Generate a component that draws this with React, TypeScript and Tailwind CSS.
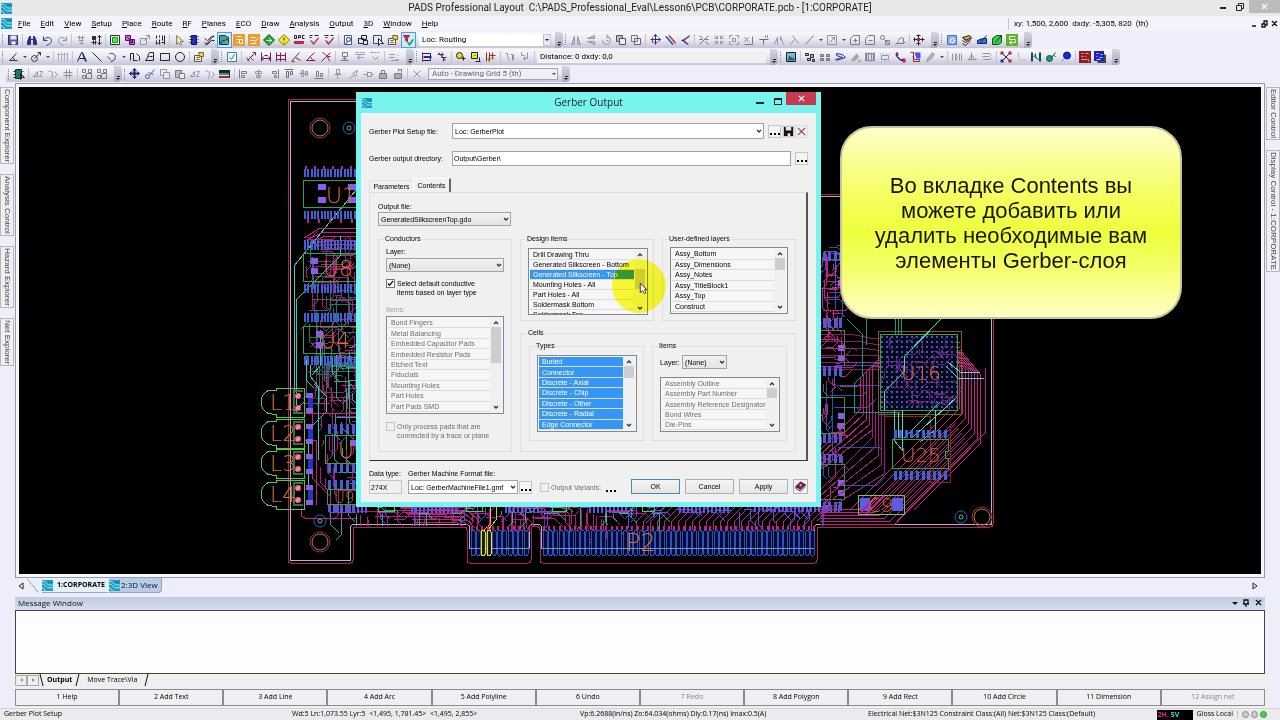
import { useState } from "react";
import type { ReactNode } from "react";
import { clsx } from "clsx";

type Shape = [d: string, stroke: string, fill?: string];

const G = "#9294a4";
const K = "#22232c";
const B = "#1c2fa8";
const R = "#a8203c";
const M = "#8c1a50";

// every toolbar glyph is drawn on a 12 x 12 grid
const glyphs: Record<string, Shape[]> = {
  save: [["M1 1H10V10H1Z", "#2e2f6e", "#5b5ea8"], ["M3 1H9V5H3Z", "none", "#e8e8f6"], ["M4 7H8V10H4Z", "none", "#fff"]],
  find: [["M1 7L3 2H4V10H1ZM7 2H8L10 7V10H7ZM4 5H7", B, "#27356f"]],
  undo: [["M2 2V6H6M2 6C4 2 10 2 10 6C10 9 7 10 5 11", "#2a3a9c"]],
  redo: [["M10 2V6H6M10 6C8 2 2 2 2 6C2 9 5 10 7 11", G]],
  libGray: [["M2 3H9M4 1V5M7 1V5M3 6H8M6 5V10M4 9H8", G]],
  libUp: [["M2 2H5V5H2ZM3 6V10M5 6V10M1 8H6", K, "#333"], ["M9 1V10M7 3L9 1L11 3M7 8L9 10L11 8", K]],
  chipGreen: [["M1 1H10V10H1Z", "#1d3a1d", "#e8ffe8"], ["M3 3H8V8H3Z", "#2a8a2a", "#58e058"]],
  swap: [["M1 1H6V6H1ZM5 5H10V10H5Z", "#501070", "#e05ad8"], ["M3 3L8 8M8 5V8H5", K]],
  swapGray: [["M1 4H7V10H1Z", G, "#e4e4ec"], ["M5 6L10 1M6 1H10V5", G]],
  nets: [["M2 1V4M2 6V10M5 1V3M5 5V10M8 1V6M10 1V10M7 8H10", K], ["M1 9H6", R]],
  pointer: [["M3 1V10L5 8L7 11L8 10L7 7H10Z", "#8a7a5a", "#f2e6c8"]],
  chip: [["M3 1H8V10H3Z", "#101080", "#2a2ab4"], ["M1 2H3M1 5H3M1 8H3M9 2H10M9 5H10M9 8H10", K]],
  traces: [["M1 4L4 6L8 2H11", M], ["M1 8L4 10L8 6H11M2 11L10 1", K]],
  route: [["M1 1H7L10 4V10H1Z", "#104040", "#40a0a8"], ["M2 9C5 3 8 9 10 2", K], ["M7 6L10 10", "#e8c020"]],
  tune: [["M-0.5 -0.5H11.5V11.5H-0.5Z", "none", "#f09a28"], ["M3 2H8M3 5H6M6 5H9V9H6ZM3 8H5", "#fff"]],
  tuneEdit: [["M-0.5 -0.5H11.5V11.5H-0.5Z", "none", "#f09a28"], ["M2 3H7M2 6H6M2 9H8M6 8L10 3", "#fff"]],
  go: [["M5.5 0L11 5.5L5.5 11L0 5.5Z", "#0a5a14", "#28a83c"], ["M3 6H8M6 4L8 6L6 8", "#fff"]],
  warn: [["M5.5 0L11 5.5L5.5 11L0 5.5Z", "#8a7a00", "#f6ec20"], ["M5.5 3V6M5.5 8V9", K]],
  drc: [["M1 1V4H3V1ZM5 4V1H7V3H5M9 1H11M9 1V4H11", K], ["M1 7H10V9H1Z", R, "#d83040"]],
  okRed: [["M1 1H4M6 1H10M1 3H3", K], ["M2 6L5 10L10 4", "#c82038"], ["M3 6L5 9L10 3", "#c82038"]],
  okRed2: [["M1 1H5M7 1H10M2 3H4", K], ["M2 6L5 10L10 4", "#b01848"], ["M3 6L5 9L10 3", "#b01848"]],
  zoomDoc: [["M2 1H9V10H2Z", "#4a5a7a", "#f4f6ff"], ["M4 5A2 2 0 1 0 8 5A2 2 0 1 0 4 5M5 7L3 10", B]],
  tile: [["M1 4H6V9H1ZM4 1H9V5H4ZM6 6H10V10H6Z", K, "#dfe4f8"]],
  selectBox: [["M1 1H9V9H1Z", "#30507a", "#dcecff"], ["M6 4V11L8 9H11Z", K, "#fff"]],
  props: [["M1 4H8V10H1Z", "#555", "#f6f4d8"], ["M5 1H10V5H6Z", "#8a6a10", "#e8c860"], ["M3 6H6M3 8H6", "#555"]],
  filter: [["M1 1H7L5 4V7L3 6V4Z", R, "#c83040"], ["M5 7L7 10L10 5M5 8L7 11L11 5", "#1c8a34"]],
  mirrorH: [["M1 10H4V2ZM7 10H10L7 2Z", G, "#c6c8d2"]],
  mirrorV: [["M9 1V4L2 4ZM9 7V10L2 7Z", G, "#c6c8d2"]],
  rotate: [["M2 6A4 4 0 1 0 6 2M6 0L8 2L6 4M6 6H8", G]],
  front: [["M1 1H7V7H1Z", "#555", "#b8bac6"], ["M4 4H10V10H4Z", "#555", "#eee"]],
  back: [["M4 4H10V10H4Z", "#666", "#eee"], ["M1 1H7V7H1Z", "#777"]],
  moveXY: [["M6 0V10M1 5H11M4 2L6 0L8 2M9 3L11 5L9 7", B], ["M3 3V8M4 8H8", R]],
  slashPair: [["M1 2L8 10M2 2L9 10", B], ["M4 1L11 9M5 1L11 8", R]],
  corner: [["M10 1L3 6M10 2L4 6", R], ["M3 5L9 10M3 6L8 10M2 6H5", B]],
  cross: [["M1 10L10 1M1 1L4 4M7 7L10 10M1 5H4M7 5H10", "#6c6e7c"]],
  quad: [["M1 1L4 4M10 1L7 4M1 10L4 7M10 10L7 7M4 1V4H1M7 1V4H10M4 10V7H1M7 10V7H10", G]],
  quadOut: [["M1 4V1H4M7 1H10V4M10 7V10H7M4 10H1V7M4 4H7V7H4Z", G]],
  xLine: [["M1 3L5 7M5 3L1 7M1 10H10M9 2V9", "#777a88"]],
  trim: [["M1 5H10M5 5V10M7 1V3M9 1V3", "#666978"]],
  wave: [["M1 10L4 3V10M7 2L10 10M7 2V6", G]],
  lambda: [["M2 10L6 5M4 1L10 9", G]],
  slash: [["M2 10L10 1", "#777a88"]],
  boxSlash: [["M1 1H10V10H1ZM3 8L8 3M5 3H8V6", G]],
  plusBox: [["M1 4L4 1H10V10H1ZM4 6H8M6 4V8", "#777a88"]],
  minusBox: [["M1 4L4 1H10V10H1ZM4 6H8", "#777a88"]],
  blobs: [["M1 3A2 2 0 1 0 5 3A2 2 0 1 0 1 3M5 5L9 9M6 6H10V10H6Z", "#777a88"]],
  blob: [["M2 9H9V4A3 3 0 0 0 5 4L4 6M1 10L4 7M9 8H11", "#777a88"]],
  target: [["M5 0V11M0 5H11M3 1H7M3 9H7M1 3V7M9 3V7", K], ["M3.5 3.5H6.5V6.5H3.5Z", "none", "#c02030"]],
  gear: [["M1 1H10V10H1Z", "#4a70c0", "#88ace8"], ["M4 6A2 2 0 1 0 8 6A2 2 0 1 0 4 6M6 3V4M6 8V9M3 6H4M8 6H9", "#fff"]],
  penRed: [["M1 3L8 1L10 3L4 6Z", K, "#d8b020"], ["M1 6L4 8L10 4M1 9L4 11L9 6", K], ["M3 4L8 9", "#b02020"]],
  penBlue: [["M1 6L6 4H10V9H1Z", "#101c60", "#2c78e0"], ["M4 8L10 1", K]],
  penGreen: [["M1 4L5 1H10V8L7 10H1Z", "#0c5a18", "#30d040"], ["M4 8L10 1", K]],
  loop: [["M-0.5 -0.5H11.5V11.5H-0.5Z", "none", "#58b828"], ["M9 2H3V5H9V8H3M5 6L3 8L5 10", "#fff"]],
  angle: [["M9 2L2 9H10M7 9A3 3 0 0 0 5 6", "#33364a"]],
  arcDim: [["M1 7A3 3 0 1 0 7 7A3 3 0 1 0 1 7M4 7L10 1M7 1H10V4", "#33364a"]],
  hatch: [["M1 1V10M4 1V10M7 1V10M10 1V10M0 3H11", "#b0b2bf"]],
  textA: [["M1 10L5 1H6L10 10M3 7H8M6 2L9 10", "#141c70"]],
  line: [["M1 1L10 10", K]],
  arc: [["M3 2C8 1 11 5 7 9L4 10M1 5L4 8", "#384088"]],
  poly: [["M1 9V2H4V9H8M7 2L10 5V9", K]],
  poly2: [["M1 9L4 5H3L5 1H9V9ZM5 5H8", K]],
  rect: [["M1 2H10V9H1Z", K]],
  ellipse: [["M1 5.5A4.5 4.5 0 1 0 10 5.5A4.5 4.5 0 1 0 1 5.5", K]],
  checkDoc: [["M1 1H10V10H1Z", "#4a7a94", "#f0faff"], ["M3 6L5 8L8 3", "#188a48"]],
  dimFree: [["M2 9L9 2", K], ["M7 1H10V4M1 6L4 10M4 5L8 9", M]],
  dimH: [["M1 1V10M10 1V10M1 7H10M3 5L1 7L3 9M8 5L10 7L8 9", M], ["M4 4H7", K]],
  dimH2: [["M1 1V10M10 1V10M5 1V10M1 4H10M1 8H10", M]],
  dimA: [["M1 10L9 1M5 6L10 9", M], ["M2 10H4", K]],
  dimB: [["M1 9H10M1 9L9 1M7 9A3 3 0 0 0 5 6", M]],
  dimC: [["M2 1C7 4 8 7 9 10M10 1L1 10M7 5H10", M]],
  drop: [["M3 1H8V5H3ZM5 5V9M1 9H9M3 7H7", "#777a88"]],
  pcr: [["M1 1H4M5 1H7M8 1H10M1 3H10M3 6H9M5 8L3 6L5 4", G]],
  lbs: [["M1 1H4M5 1H7M8 1H10M3 5L6 8L9 5", G]],
  calc: [["M1 3H6M1 6H6M8 8H10M9 4H10M3 9H10", G]],
  dimBlue: [["M1 1V10M1 2H9M1 9H9M9 2V9", K], ["M2 5H10M2 6H10", B], ["M1 2V10", R]],
  arrowPair: [["M1 3H7M5 1L7 3L5 5", R], ["M5 6H10M7 7V10", B], ["M2 1L9 9", K]],
  yellowO: [["M1 4A3 3 0 1 0 7 4A3 3 0 1 0 1 4", K, "#e8e020"], ["M6 7H10M8 5V9", K]],
  yellowBox: [["M1 1H7V7H1Z", K, "#f4ea20"], ["M4 4H5M9 6V10M5 10H10", K]],
  yellowH: [["M1 1V10M4 4H10M4 1V10M7 1V8", R], ["M2 7H9M3 6V10", "#a0a010"]],
  sig: [["M1 2H3V5M3 5L5 9M6 3H8V9M9 3V9", G]],
  sig2: [["M2 1V4H5M8 1V7H4M6 5L4 7L6 9", G]],
  picture: [["M1 1H10V10H1Z", "#1a2430", "#7ab4e8"], ["M2 9L4 4L7 7L8 5L9 9Z", "none", "#28684a"]],
  frags: [["M1 2H4V4H1ZM6 3H9V6H6ZM3 7H6V9H3ZM8 8H10V10H8Z", K, "#c8c490"]],
  dashes: [["M1 3H4V5H1ZM7 3H10V5H7ZM1 7H4V9H1ZM7 7H10V9H7Z", "#666978", "#b8bac4"]],
  layers: [["M2 2L8 3L11 6L2 9L1 8L8 6L2 4Z", "#3434a8", "#d8dcff"]],
  grayFan: [["M1 9L7 2L10 5L5 10ZM9 8H11V11H9Z", "none", "#a4a6b2"]],
  dotBox: [["M2 2H9V9H2Z", "#777a88", "#d8d8e0"], ["M1 1V10M4 1V10M7 1V10M10 1V10", G]],
  dotBox2: [["M2 4H9V8H2ZM1 2V3M4 2V3M7 2V3M10 2V3M2 10V11M6 10V11M10 10V11", G]],
  hose: [["M2 1V5L6 9H10M3 1V5L6 8H10", B], ["M1 4H4V2H1ZM8 7H11V11H8Z", "none", "#c02038"]],
  padGroup: [["M1 1H4V10H10V8H6L3 5", R], ["M5 1H11V7H7Z", "none", "#3c58e8"]],
  pen: [["M2 10L4 6L8 1L10 3L6 8Z", G, "#b4b6c0"]],
  bars: [["M1 2V9M4 2V9L6 5L4 2M8 2V9M10 2V9", G]],
  tent: [["M2 9L5 3L9 9M1 8H10M5 1V9", G]],
  hands: [["M1 2H8L10 4M1 5H8M2 8H9L10 6", G]],
  cross2: [["M2 2L9 9M9 2L2 9", K], ["M0 0H3V3H0ZM8 8H11V11H8ZM8 0H11V3H8Z", "none", "#c02038"], ["M0 8H3V11H0Z", "none", B]],
  hook: [["M3 1V6C3 9 6 9 10 9", "#b4b6c0"]],
  pads: [["M1 1V10M4 4L7 7M10 1V10M5 2V6M2 1V10M9 1V10", "#104858"], ["M2 4L9 9", "#18a058"]],
  guitar: [["M1 7A3 3 0 1 0 7 7A3 3 0 1 0 1 7M6 6L10 1M8 4L10 5", "#0a5a48", "#1c9a70"]],
  ballBlue: [["M3 4A3.5 3.5 0 1 0 10 4A3.5 3.5 0 1 0 3 4", "#0a1480", "#1428e0"], ["M4 7L1 10", "#28b0c8"]],
  gridRed: [["M-0.5 -0.5H11.5V11.5H-0.5Z", "none", "#901c28"], ["M2 2H4M6 2H9M2 5H4M6 5H7M2 8H8M9 8V10", "#e8a8a8"]],
  gridBlue: [["M3 3H11.5V11.5H3Z", "none", "#444"], ["M-0.5 -0.5H9.5V9.5H-0.5Z", "none", "#1c24b8"], ["M2 2H4M6 3H8M2 5H3M5 6H8M2 8H6", "#c8d0ff"]],
  greenChip: [["M2 1H8V10H2Z", "#0a3a28", "#187858"], ["M0 3H2M0 6H2M0 9H2M9 3H10", K], ["M7 5V11L9 9H11Z", K]],
  step: [["M1 8H5V3M1 8L5 3M7 3H10L7 8H10", G]],
  curl: [["M1 3C5 1 6 6 4 10M7 3L10 6L7 9", G]],
  hashes: [["M1 4H10M1 7H10M4 1V10M7 1V10", G]],
  group: [["M1 1H4V4H1ZM7 1H10V4H7ZM1 7H4V10H1ZM5 5H10V10H5Z", "#777a88"]],
  move: [["M5 0V10M0 5H10M3 2L5 0L7 2M3 8L5 10L7 8M2 3L0 5L2 7M8 3L10 5L8 7", "#1c2470"], ["M4 1H6V9H4ZM1 4H9V6H1Z", "none", "#1c2470"]],
  cut: [["M10 1L5 7M9 6L4 4M1 8A2 2 0 1 0 5 8A2 2 0 1 0 1 8", "#3a70b0"]],
  copy: [["M1 1H7V7H1Z", G, "#eee"], ["M4 4H10V10H4Z", G, "#e6e6ee"]],
  paste: [["M1 2H7V9H1Z", "#777a88", "#b8bac6"], ["M5 5H10V10H5Z", "#777a88", "#eee"]],
  layerBar: [["M-0.5 1.5H10.5V4.5H-0.5Z", "none", K], ["M-0.5 4.5H10.5V6.5H-0.5Z", "none", "#28a048"], ["M-0.5 7.5H10.5V9.5H-0.5Z", "none", "#b02038"], ["M10 2V9", K]],
  alL: [["M1 1V10M3 3H8V5H3ZM3 7H6V9H3Z", "#777a88"]],
  alC: [["M5 1V10M2 3H8V5H2ZM3 7H7V9H3Z", G]],
  alR: [["M10 1V10M4 3H8V5H4ZM6 7H8V9H6Z", "#777a88"]],
  alT: [["M1 1H10M3 3H5V9H3ZM7 3H9V6H7Z", "#666978"]],
  alM: [["M1 5H10M3 2H5V8H3ZM7 3H9V7H7Z", G]],
  alB: [["M1 10H10M3 3H5V8H3ZM7 5H9V8H7Z", "#777a88"]],
  pin: [["M4 1H7V5H4ZM2 6H9M5 6V10", G]],
  pin2: [["M10 2L5 5L8 8ZM6 7L2 10", G]],
  pin3: [["M1 6H5M5 3V9M5 4H9V8H5M9 6H11", G]],
  lock: [["M2 5H9V10H2Z", "#777a88", "#a8aab6"], ["M4 5V2H7V5", "#777a88"]],
  unlock: [["M2 5H9V10H2Z", "#777a88", "#a8aab6"], ["M6 3V1H9V4", "#777a88"]],
  del: [["M2 2L9 9M9 2L2 9", G]],
};

// the half-unit origin puts one-pixel strokes on whole pixels
function Glyph({ name }: { name: string }) {
  return (
    <svg viewBox="-0.5 -0.5 12 12" className="size-3" aria-hidden="true">
      {glyphs[name].map(([d, stroke, fill], i) => (
        <path key={i} d={d} stroke={stroke} fill={fill ?? "none"} strokeWidth="1" />
      ))}
    </svg>
  );
}

function Logo({ className = "size-[11px]" }: { className?: string }) {
  return (
    <svg viewBox="0 0 12 12" className={clsx("shrink-0", className)} aria-hidden="true">
      <rect width="12" height="12" fill="#1f9cc4" />
      <path d="M0 1.5H3L7 5.5H12M0 4.5H2L6 8.5H12" stroke="#b8eef8" fill="none" />
      <path d="M6 2.5H12" stroke="#1678a0" fill="none" />
      <path d="M0 8L4 11.5" stroke="#e8fbff" fill="none" />
    </svg>
  );
}

function Chevron({ up = false, className }: { up?: boolean; className?: string }) {
  return (
    <svg viewBox="0 0 8 8" className={clsx("size-2", className)} aria-hidden="true">
      <path d={up ? "M2 5L4 3L6 5" : "M2 3L4 5L6 3"} stroke="#333" strokeWidth="1.3" fill="none" />
    </svg>
  );
}

// "|" is a separator, "v" a drop arrow, "*" in front of a name marks a pressed button
function Toolbar({ items, children, className }: { items: string; children?: ReactNode; className?: string }) {
  return (
    <div
      role="toolbar"
      className={clsx(
        "flex h-4 shrink-0 items-center rounded-r-sm bg-linear-to-b from-[#f8f8fd] via-[#e8e8f2] to-[#c4c4d6]",
        className
      )}
    >
      <span className="mx-[2px] h-[11px] w-[2px] border-l border-dotted border-[#8486a0]" />
      {items.split(" ").map((item, i) => {
        if (item === "|") return <span key={i} className="mx-px h-3 w-[2px] border-l border-[#c3c3d2]" />;
        if (item === "v")
          return (
            <span key={i} className="flex w-2 justify-center">
              <span className="border-x-2 border-t-2 border-x-transparent border-t-[#444]" />
            </span>
          );
        const pressed = item.startsWith("*");
        const name = pressed ? item.slice(1) : item;
        return (
          <button
            key={i}
            type="button"
            aria-label={name}
            className={clsx(
              "flex h-4 w-[15px] items-start justify-start pt-[2px] pl-px",
              pressed && "bg-[#cfe8fa] inset-ring inset-ring-[#4f9fd4]"
            )}
          >
            <Glyph name={name} />
          </button>
        );
      })}
      {children}
      <span className="ml-1 flex h-4 w-2 flex-col items-center justify-end rounded-r-sm bg-linear-to-b from-[#d4d5e2] to-[#a9abc0] pb-[2px]">
        <span className="mb-px h-px w-[3px] bg-[#222]" />
        <span className="border-x-2 border-t-2 border-x-transparent border-t-[#222]" />
      </span>
    </div>
  );
}

const menus = ["File", "Edit", "View", "Setup", "Place", "Route", "RF", "Planes", "ECO", "Draw", "Analysis", "Output", "3D", "Window", "Help"];

function Header() {
  return (
    <header className="font-['Roboto','Open_Sans',sans-serif]">
      <div className="flex h-4 items-center bg-[#e9e8e8]">
        <Logo className="ml-px size-[11px]" />
        <h1 className="flex-1 pl-[54px] text-center text-[10px] leading-4 whitespace-pre text-[#222]">
          {"PADS Professional Layout  C:\\PADS_Professional_Eval\\Lesson6\\PCB\\CORPORATE.pcb - [1:CORPORATE]"}
        </h1>
        <button type="button" aria-label="Minimize" className="flex h-4 w-[17px] items-center justify-center">
          <span className="h-[2px] w-[6px] bg-[#222]" />
        </button>
        <button type="button" aria-label="Restore" className="mr-px flex h-[13px] w-[17px] items-center justify-center self-start">
          <svg viewBox="0 0 8 8" className="size-2"><path d="M0.5 2.5H5.5V7.5H0.5ZM2.5 2.5V0.5H7.5V5.5H5.5" stroke="#222" fill="none" /></svg>
        </button>
        <button type="button" aria-label="Close" className="flex h-[13px] w-[31px] items-center justify-center self-start bg-[#bcbcbc]">
          <svg viewBox="0 0 8 8" className="size-[7px]"><path d="M1 1L7 7M7 1L1 7" stroke="#fff" strokeWidth="1.5" /></svg>
        </button>
      </div>

      <div className="flex h-[15px] items-center bg-[#f4f3fb] text-[8px] text-black">
        <Logo className="ml-px size-[11px]" />
        <nav className="ml-[6px] flex flex-1 gap-[10px]">
          {menus.map((menu) => (
            <button key={menu} type="button">
              <span className="underline">{menu[0]}</span>
              {menu.slice(1)}
            </button>
          ))}
        </nav>
        <span className="w-[243px] border-l border-[#c8c8d4] pl-[5px] whitespace-pre">{"xy: 1,500, 2,600  dxdy: -5,305, 820  (th)"}</span>
        <svg viewBox="0 0 28 8" className="mr-px h-2 w-7" aria-hidden="true">
          <path d="M1 6H5" stroke="#111" strokeWidth="1.5" />
          <path d="M11 4H14V7H11ZM13 4V1H16V5H14M21 1L26 6M26 1L21 6" stroke="#111" strokeWidth="1.3" fill="none" />
        </svg>
      </div>

      <div className="flex h-[17px] items-center">
        <Toolbar items="save | find undo redo | libGray libUp | chipGreen swap swapGray nets | pointer chip traces *route tune tuneEdit go warn drc okRed okRed2 | zoomDoc tile selectBox props *filter">
          <select aria-label="Scheme" className="ml-[3px] h-3 w-[124px] appearance-none bg-white px-[3px] text-[8px] leading-3 text-black">
            <option>Loc: Routing</option>
          </select>
          <span className="flex h-3 w-2 items-center justify-center border border-[#c3c4d4] bg-[#e9e9f2]">
            <span className="border-x-2 border-t-2 border-x-transparent border-t-[#222]" />
          </span>
        </Toolbar>
        <Toolbar items="mirrorH mirrorV rotate front back | moveXY slashPair corner | cross quad quadOut xLine trim wave lambda slash v boxSlash v plusBox minusBox blobs blob | target" />
        <Toolbar items="gear penRed penBlue penGreen loop" />
      </div>

      <div className="flex h-[17px] items-center">
        <Toolbar items="angle v arcDim v | hatch | textA line arc v poly poly2 rect ellipse | props" />
        <Toolbar items="checkDoc | dimFree dimH dimH2 dimA dimB dimC | drop pcr lbs | calc" />
        <Toolbar items="dimBlue arrowPair | yellowO yellowBox yellowH | sig sig2 |">
          <output className="h-3 w-[229px] bg-[#f1f1f4] px-[3px] text-[8px] leading-3 text-black">Distance: 0 dxdy: 0,0</output>
        </Toolbar>
        <Toolbar items="picture | frags dashes layers grayFan dotBox dotBox2 hose padGroup pen v | bars tent hands | cross2 hook pads guitar ballBlue | gridRed gridBlue" />
      </div>

      <div className="flex h-[18px] items-center pl-[6px]">
        <Toolbar items="greenChip | step curl hashes | group group" />
        <Toolbar items="move cut copy paste step curl layerBar | alL alC alR alT alM alB | pin pin2 pin3 lock unlock | del">
          <select aria-label="Grid" className="ml-[3px] h-3 w-[122px] appearance-none border border-r-0 border-[#a4a5b4] bg-[#f0f0f4] px-[3px] text-[8px] leading-[10px] text-[#666]">
            <option>Auto - Drawing Grid 5 (th)</option>
          </select>
          <span className="flex h-3 w-2 items-center justify-center border border-l-0 border-[#a4a5b4] bg-[#f0f0f4]">
            <span className="border-x-2 border-t-2 border-x-transparent border-t-[#444]" />
          </span>
        </Toolbar>
      </div>
    </header>
  );
}

function SideTabs({ tabs, className }: { tabs: string[]; className?: string }) {
  return (
    <aside className={clsx("flex w-[15px] shrink-0 flex-col gap-[10px] pt-1 font-['Liberation_Sans',sans-serif]", className)}>
      {tabs.map((tab) => (
        <button
          key={tab}
          type="button"
          className="flex w-[14px] flex-col items-center border border-[#b4b5c4] bg-[#f0f0f3] py-px"
        >
          <span className="text-[8px] leading-3 whitespace-nowrap text-[#444] [writing-mode:vertical-rl]">{tab}</span>
        </button>
      ))}
    </aside>
  );
}

/* ---------- board drawing ---------- */

const seeded = (seed: number) => () => {
  seed = (seed * 16807) % 2147483647;
  return seed / 2147483647;
};

const MAGENTA = "#c41e88";
const CYAN = "#38ccb4";
const PIN = "#4260d8";
const GREEN = "#3aa23a";

function pinRow(x0: number, x1: number, y: number, h: number, step = 3.3) {
  let d = "";
  for (let x = x0; x < x1; x += step) d += `M${x.toFixed(1)} ${y}v${h}`;
  return d;
}

// short dog-leg traces scattered over a box
function tangle(seed: number, x0: number, y0: number, x1: number, y1: number, count: number, reach: number) {
  const rnd = seeded(seed);
  let d = "";
  for (let i = 0; i < count; i++) {
    const x = Math.round(x0 + rnd() * (x1 - x0)) + 0.5;
    const y = Math.round(y0 + rnd() * (y1 - y0)) + 0.5;
    const len = 4 + Math.round(rnd() * reach);
    const leg = 2 + Math.round(rnd() * 7);
    const dir = rnd() > 0.5 ? 1 : -1;
    d += rnd() > 0.45 ? `M${x} ${y}h${len}l${leg} ${leg * dir}` : `M${x} ${y}v${len}l${leg * dir} ${leg}`;
  }
  return d;
}

function bundle(count: number, path: (i: number) => string) {
  return Array.from({ length: count }, (_, i) => path(i)).join("");
}

function Refdes({ x, y, size = 22, children }: { x: number; y: number; size?: number; children: string }) {
  return (
    <text x={x} y={y} fontSize={size} fill="#d87034" stroke="none" fontWeight="200" fontFamily="'DejaVu Sans', 'DejaVu Sans Light', sans-serif">
      {children}
    </text>
  );
}

function Hole({ x, y, r, color }: { x: number; y: number; r: number; color: string }) {
  return (
    <g fill="none">
      <circle cx={x} cy={y} r={r} stroke={color} />
      <circle cx={x} cy={y} r={r > 8 ? r - 2 : 2} stroke={r > 8 ? "#a08c3c" : "#30c8b0"} />
    </g>
  );
}

function Led({ y, label }: { y: number; label: string }) {
  return (
    <g fill="none" stroke="#56c848">
      <path d={`M304 ${y - 14}H276V${y - 12}H272A11 12 0 0 0 272 ${y + 12}H276V${y + 15}H304Z`} />
      <path d={`M303 ${y - 11}H294V${y + 11}H303`} stroke="#2a7a34" strokeWidth="2" />
      <path d={`M310 ${y - 9}v20`} stroke="#2038c0" strokeWidth="5" />
      <path d={`M306 ${y - 9}h7v5h-7zM306 ${y + 6}h7v5h-7z`} fill="#8a5ce8" stroke="none" />
      <Refdes x={270} y={y + 8}>{label}</Refdes>
      <circle cx="298" cy={y - 6} r="2.5" fill="#f8907c" stroke="#e0309c" />
      <circle cx="298" cy={y + 6} r="2.5" fill="#f8907c" stroke="#e0309c" />
    </g>
  );
}

function Board() {
  return (
    <svg className="block size-full" aria-label="Board layout" shapeRendering="crispEdges">
      <defs>
        <pattern id="bga" width="5" height="5" patternUnits="userSpaceOnUse">
          <rect width="5" height="5" fill="#08081c" />
          <rect x="1" y="1" width="2" height="2" fill="#4258c0" />
        </pattern>
        <clipPath id="inside">
          <path d="M291 103H830V197H991V526H816V560H541V526H530V560H469V526H351V560H291Z" />
        </clipPath>
      </defs>
      <g transform="translate(-19 -87)">
        <path d="M356 99H291Q288 99 288 102V560Q288 563 291 563H350Q353 563 353 560V530Q353 527 356 527H464Q467 527 467 530V560Q467 563 470 563H528Q531 563 531 560V530Q531 526 535 526Q540 526 540 530V560Q540 563 543 563H814Q817 563 817 560V530Q817 527 820 527H990Q993 527 993 524V194H820" fill="none" stroke="#b82444" />
        <path d="M356 101.5H290.5V560.5H350.5V528Q350.5 524.5 354 524.5H466Q469.5 524.5 469.5 528V548.5H529.5V528Q530 524 535.5 524Q541.5 524 541.5 528V548.5H814.5V528Q814.5 524.5 818 524.5H991V196.5H820" fill="none" stroke="#a8b4dc" />

        <g clipPath="url(#inside)" fill="none">
          {/* left edge */}
          <path d={bundle(5, (i) => `M${304 + i * 3} ${238 + i * 2}L${320 + i * 3} ${228 + i * 4}H356`)} stroke={MAGENTA} />
          <path d={tangle(11, 306, 236, 356, 300, 54, 24) + tangle(17, 310, 318, 356, 400, 60, 22)} stroke={MAGENTA} opacity="0.85" />
          <path d={tangle(29, 306, 240, 350, 380, 46, 40)} stroke="#1a8478" opacity="0.9" />
          <path d={tangle(37, 330, 330, 356, 505, 28, 40)} stroke={CYAN} opacity="0.8" />
          <path d={tangle(43, 320, 400, 356, 500, 24, 24)} stroke="#a01c88" />
          <path d="M356 190L294 266V412L304 402M296 412V300L322 274L340 256V236M310 365V376L318 386V460M314 384L326 396V412L308 430V488M312 375L320 366V330M306 360V380L314 388" stroke={CYAN} />
          <path d="M301 508V516L305 518H356M312 400V478L330 496V512H356M304 413H356M304 403H330M304 440H316V505" stroke={MAGENTA} />
          <path d={pinRow(305, 356, 169, 8) + pinRow(305, 356, 211, 8)} stroke={PIN} strokeWidth="2" />
          <path d={pinRow(305, 356, 240, 10) + pinRow(305, 356, 284, 9)} stroke={PIN} strokeWidth="2" />
          <path d={pinRow(305, 356, 313, 9) + pinRow(305, 356, 356, 9)} stroke={PIN} strokeWidth="2" />
          <path d={pinRow(329, 356, 424, 10, 6) + pinRow(329, 356, 463, 10, 6) + pinRow(329, 356, 480, 9, 6) + pinRow(329, 356, 504, 8, 6)} stroke={PIN} strokeWidth="3" />
          <path d="M303.5 180.5H360V207.5H303.5ZM303.5 253.5H360V281.5H303.5ZM303.5 326.5H360V353.5H303.5ZM325.5 435.5H360V463.5H325.5ZM327.5 489.5H360V504.5H327.5Z" stroke={GREEN} />
          <path d="M318 184h8v6h-8zM318 197h8v6h-8zM348 184h8v6h-8zM348 197h8v6h-8zM311 258h7v6h-7zM311 268h7v6h-7zM316 331h7v6h-7zM316 342h7v6h-7zM350 440h6v6h-6z" fill="#8a5ce8" />
          <path d={pinRow(306, 356, 166, 3, 9) + pinRow(308, 356, 219, 4, 11)} stroke={MAGENTA} strokeWidth="2" />

          {/* connector and the strip above it */}
          <path d={bundle(26, (i) => `M${636 + i * 7} 530V522L${652 + i * 7} 506`)} stroke={MAGENTA} />
          <path d={bundle(6, (i) => `M${400 + i * 3} ${507 + i * 3}H${470 - i * 3}L${480 - i * 3} ${517 + i * 2}`)} stroke={MAGENTA} />
          <path d={tangle(71, 356, 507, 620, 520, 90, 26)} stroke={MAGENTA} opacity="0.9" />
          <path d={tangle(83, 356, 505, 660, 514, 30, 14)} stroke={CYAN} opacity="0.8" />
          <path d={tangle(97, 380, 505, 820, 512, 40, 14)} stroke="#5a4ce0" />
          <path d={pinRow(330, 370, 505, 8, 4) + pinRow(412, 460, 505, 8, 4) + pinRow(506, 540, 505, 8, 4) + pinRow(590, 630, 505, 8, 4) + pinRow(680, 730, 505, 8, 4) + pinRow(755, 840, 505, 7, 4)} stroke="#6a50dc" strokeWidth="2" />
          <path d="M378 505h16v6h-16zM466 505h16v6h-16zM552 505h14v6h-14zM642 505h12v6h-12z" stroke="#56c848" />
          <path d="M490 505V524L484 530M496 505V520L488 530" stroke="#d8d020" />
          <path d={pinRow(472, 530, 526, 4, 5.2) + pinRow(544, 816, 526, 4, 5.2)} stroke={MAGENTA} strokeWidth="2" />
        </g>
        <path
          d={bundle(11, (i) => `M${471 + i * 5.3} 532q2-4 4 0v22q-2 4-4 0z`) + bundle(51, (i) => `M${543 + i * 5.35} 532q2-4 4 0v22q-2 4-4 0z`)}
          fill="#060c30"
          stroke="#2c50c8"
        />
        <path d="M470 548.5H530M542 548.5H814" stroke="#7c90d0" />
        <path d="M481 532q2-4 4 0v22q-2 4-4 0zM487 532q2-4 4 0v22q-2 4-4 0z" fill="#1c1c00" stroke="#f0e400" />
        <Refdes x={626} y={551} size={24}>P2</Refdes>

        <Led y={402} label="L1" />
        <Led y={433} label="L2" />
        <Led y={463} label="L3" />
        <Led y={494} label="L4" />
        <Refdes x={326} y={203}>U1</Refdes>
        <Refdes x={323} y={276}>U8</Refdes>
        <Refdes x={320} y={348}>U4</Refdes>
        <Refdes x={338} y={458}>U</Refdes>
        <Refdes x={334} y={503} size={15}>U9</Refdes>

        {/* right part */}
        <g clipPath="url(#inside)" fill="none">
          <path d={tangle(5, 818, 240, 842, 330, 40, 20) + tangle(8, 818, 330, 842, 500, 34, 16)} stroke={MAGENTA} />
          <path d={tangle(6, 818, 240, 842, 510, 30, 50)} stroke="#3468d8" opacity="0.8" />
          <path d={pinRow(824, 846, 252, 9, 5.5) + pinRow(824, 846, 318, 10, 5.5) + pinRow(824, 846, 366, 10, 5.5) + pinRow(824, 846, 434, 9, 5.5) + pinRow(824, 846, 454, 9, 5.5) + pinRow(824, 846, 502, 9, 5.5)} stroke={PIN} strokeWidth="3" />
          <path d="M820 330.5H844.5V366M820 397.5H844.5V433H820M820 464.5H844.5V499.5H820" stroke="#4c8c3c" />
          <path d="M838 345h6v6h-6zM838 355h6v6h-6zM838 413h6v6h-6zM838 423h6v6h-6zM838 480h6v6h-6zM838 490h6v6h-6zM838 280h6v6h-6z" fill="#8a5ce8" />
          <path d={bundle(5, (i) => `M820 ${450 + i * 5}L${860 + i * 3} ${410 + i * 5}V${378 - i * 3}L${872 + i * 3} ${366 - i * 3}H890`)} stroke={MAGENTA} />
          <path d={bundle(5, (i) => `M820 ${490 + i * 6}L${872 + i * 3} ${438 + i * 9}V412`)} stroke="#a01c78" />
          <path d={bundle(6, (i) => `M820 ${509 + i * 3}H${870 + i * 5}L${956 + i * 3} ${423 + i * 5}`)} stroke={MAGENTA} />
          <path d={bundle(9, (i) => `M${850 + i * 8} 510L${956 + i * 3} ${404 + i * 5}V${366 + i}L${944 + i * 2} 350`)} stroke={MAGENTA} />
          <path d={bundle(5, (i) => `M${920 + i * 7} 336L${944 + i * 3} ${342 + i * 5}H960`)} stroke="#d0309c" />
          <path d={bundle(6, (i) => `M820 ${334 + i * 7}H${850 + i * 6}L${870 + i * 3} ${338 + i * 6}H900`)} stroke={MAGENTA} opacity="0.75" />
          <path d="M985 368V433L897 521" stroke={MAGENTA} />
          <rect x="880.5" y="334.5" width="77" height="76" fill="url(#bga)" stroke={GREEN} />
          <path d="M878 331H961V414H878Z" stroke="#8c5a20" />
          <path d={tangle(19, 884, 336, 950, 404, 64, 8)} stroke="#8028a0" opacity="0.8" />
          <path d="M885 416H930V482H950V424" stroke="#901c28" />
          <path d="M941 319L904 357V372L884 392V410M946 366L958 378H984M948 362L960 372H980M894 410V440L902 450V410M898 412V438M904 438L940 402M912 438L956 398M935 410V430L920 442" stroke="#44dcc4" />
          <path d="M847 319L862 334V376L854 384V412H900M866 319V345M895 319V334M898 319V334M901 319V334" stroke="#1a9484" />
          <path d={pinRow(895, 948, 430, 8, 5.6) + pinRow(895, 948, 471, 9, 5.6)} stroke={PIN} strokeWidth="3" />
          <path d="M892.5 439.5H948.5V451H945V458H948.5V468.5H892.5Z" stroke={GREEN} />
          <path d="M860 498h10v13h-10zM892 498h11v13h-11z" fill="#5c5ce8" />
          <path d="M858.5 495.5H904.5V514.5H858.5Z" stroke="#6ac85c" />
          <path d="M861 512L876 497M866 514L884 496" stroke={MAGENTA} strokeWidth="2" />
        </g>
        <Refdes x={901} y={380} size={20}>U16</Refdes>
        <Refdes x={901} y={462} size={20}>U25</Refdes>
        <Refdes x={868} y={512} size={19}>C9</Refdes>

        <g shapeRendering="auto">
          <Hole x={320} y={128} r={10} color="#a8245c" />
          <Hole x={349} y={128} r={6} color="#2c60c0" />
          <Hole x={320} y={521} r={6} color="#2c60c0" />
          <Hole x={320} y={542} r={10} color="#a8245c" />
          <Hole x={961} y={517} r={6} color="#2c60c0" />
          <Hole x={982} y={517} r={10} color="#a8245c" />
        </g>
      </g>
    </svg>
  );
}

/* ---------- dialog ---------- */

function Combo({ id, value, options = [], className, white, label }: { id?: string; value: string; options?: string[]; className?: string; white?: boolean; label?: string }) {
  return (
    <div className={clsx("relative", className)}>
      <select
        id={id}
        aria-label={label}
        defaultValue={value}
        className={clsx(
          "block size-full appearance-none border border-[#a3a3a3] pr-2 pl-[2px] text-black",
          white ? "bg-white" : "bg-linear-to-b from-[#f2f2f2] to-[#e3e3e3]"
        )}
      >
        {[value, ...options].map((o) => (
          <option key={o}>{o}</option>
        ))}
      </select>
      <Chevron className="pointer-events-none absolute inset-y-0 right-px my-auto" />
    </div>
  );
}

interface ListBoxProps {
  label: string;
  items: string[];
  selected?: string[];
  disabled?: boolean;
  thumb: string;
  className?: string;
}

function ListBox({ label, items, selected = [], disabled, thumb, className }: ListBoxProps) {
  const [picked, setPicked] = useState(selected);
  const toggle = (item: string) => {
    if (disabled) return;
    setPicked(picked.includes(item) ? picked.filter((p) => p !== item) : [...picked, item]);
  };

  return (
    <div className={clsx("flex overflow-hidden border border-[#828790] bg-[#f6f6f6] p-px", className)}>
      <ul role="listbox" aria-label={label} aria-disabled={disabled} className="flex min-w-0 flex-1 flex-col">
        {items.map((item) => (
          <li
            key={item}
            role="option"
            aria-selected={picked.includes(item)}
            onClick={() => toggle(item)}
            className={clsx(
              "flex min-h-[10px] flex-1 items-center border-b border-[#dcdcdc] pl-[3px] leading-[9px] whitespace-nowrap",
              picked.includes(item) && "bg-[#3596f5] text-white",
              disabled && "text-[#6d6d6d]"
            )}
          >
            {item}
          </li>
        ))}
      </ul>
      <div className="flex w-3 shrink-0 flex-col items-center bg-[#f0f0f0] py-px">
        <Chevron up />
        <span className={clsx("w-[10px] bg-[#cdcdcd]", thumb)} />
        <Chevron className="mt-auto" />
      </div>
    </div>
  );
}

function Group({ title, className, children }: { title: string; className?: string; children: ReactNode }) {
  return (
    <fieldset className={clsx("min-w-0 border border-[#dedede]", className)}>
      <legend className="-ml-[2px] h-[10px] px-px leading-[10px]">{title}</legend>
      {children}
    </fieldset>
  );
}

function Dots({ label, flat }: { label: string; flat?: boolean }) {
  return (
    <button
      type="button"
      aria-label={label}
      className={clsx("flex h-[13px] w-[13px] shrink-0 items-end justify-center gap-[2px] pb-[2px]", !flat && "border border-[#c4c4c4] bg-[#f4f4f4]")}
    >
      <span className="size-[2px] bg-black" />
      <span className="size-[2px] bg-black" />
      <span className="size-[2px] bg-black" />
    </button>
  );
}

const conductorItems = ["Bond Fingers", "Metal Balancing", "Embedded Capacitor Pads", "Embedded Resistor Pads", "Etched Text", "Fiducials", "Mounting Holes", "Part Holes", "Part Pads SMD"];
const designItems = ["Drill Drawing Thru", "Generated Silkscreen - Bottom", "Generated Silkscreen - Top", "Mounting Holes - All", "Part Holes - All", "Soldermask Bottom", "Soldermask Top"];
const userLayers = ["Assy_Bottom", "Assy_Dimensions", "Assy_Notes", "Assy_TitleBlock1", "Assy_Top", "Construct"];
const cellTypes = ["Buried", "Connector", "Discrete - Axial", "Discrete - Chip", "Discrete - Other", "Discrete - Radial", "Edge Connector"];
const cellItems = ["Assembly Outline", "Assembly Part Number", "Assembly Reference Designator", "Bond Wires", "Die-Pins"];

function GerberDialog() {
  return (
    <section
      role="dialog"
      aria-labelledby="gerber-title"
      className="absolute top-[5px] left-[337px] flex w-[465px] flex-col bg-[#78f4ee] px-[5px] pb-[5px] font-['Liberation_Sans',sans-serif] text-[7px] leading-[9px] text-black"
    >
      <div className="flex h-[21px] items-center font-['Open_Sans',sans-serif]">
        <Logo className="ml-px size-[10px]" />
        <h2 id="gerber-title" className="flex-1 pl-[54px] text-center text-[10px] text-[#222]">Gerber Output</h2>
        <button type="button" aria-label="Minimize" className="flex h-4 w-[18px] items-center justify-center">
          <span className="h-[2px] w-2 bg-[#222]" />
        </button>
        <button type="button" aria-label="Maximize" className="mb-[3px] flex h-4 w-[17px] items-center justify-center">
          <span className="h-[7px] w-2 border border-t-2 border-[#222]" />
        </button>
        <button type="button" aria-label="Close" className="flex h-[13px] w-[30px] items-center justify-center self-start bg-[#c73a50]">
          <svg viewBox="0 0 8 8" className="size-[7px]"><path d="M1 1L7 7M7 1L1 7" stroke="#fff" strokeWidth="1.5" /></svg>
        </button>
      </div>

      <form className="flex flex-col bg-[#f0f0f0] px-2 pt-[10px] pb-[8px]" onSubmit={(e) => e.preventDefault()}>
        <div className="flex items-center">
          <label htmlFor="setup" className="w-[83px]">Gerber Plot Setup file:</label>
          <Combo id="setup" value="Loc: GerberPlot" white className="mr-1 h-4 flex-1" />
          <Dots label="Browse setup file" />
          <button type="button" aria-label="Save" className="ml-px flex size-[13px] items-center justify-center bg-[#ddd]">
            <svg viewBox="0 0 12 12" className="size-[11px]"><path d="M1 1H11V11H1Z" fill="#111" /><path d="M3 1H9V5H3ZM5 8H8V11H5Z" fill="#e8e8e8" /></svg>
          </button>
          <button type="button" aria-label="Delete" className="flex size-[13px] items-center justify-center border border-[#dcdcdc]">
            <svg viewBox="0 0 12 12" className="size-[11px]"><path d="M2 2L10 10M10 2L2 10" stroke="#984058" strokeWidth="1.3" /></svg>
          </button>
        </div>

        <div className="mt-3 flex items-center">
          <label htmlFor="outdir" className="w-[83px]">Gerber output directory:</label>
          <input id="outdir" defaultValue="Output\Gerber\" className="mr-1 h-[15px] min-w-0 flex-1 border border-[#a3a3a3] bg-white px-px" />
          <Dots label="Browse output directory" />
        </div>

        <div role="tablist" className="mt-3 flex items-end">
          <button type="button" role="tab" aria-selected="false" className="h-3 w-11 border-t border-l border-[#e0e0e0]">Parameters</button>
          <button type="button" role="tab" aria-selected="true" className="h-[14px] w-[38px] border-t border-l border-white border-r-2 border-r-[#666] bg-[#f0f0f0]">Contents</button>
        </div>

        <div className="flex h-[269px] flex-col border-t border-l border-[#dcdcdc] border-r-2 border-b border-r-[#555] border-b-[#333] px-2 pt-[9px]">
          <label htmlFor="outfile">Output file:</label>
          <Combo id="outfile" value="GeneratedSilkscreenTop.gdo" className="mt-px h-[14px] w-[133px]" />

          <div className="mt-2 flex gap-2">
            <Group title="Conductors" className="flex h-[218px] w-[134px] flex-col px-[7px]">
              <div className="mt-[3px] flex flex-col">
                <label htmlFor="layer">Layer:</label>
                <Combo id="layer" value="(None)" className="mt-[2px] h-[14px] w-[118px]" />
                <label className="mt-[7px] flex items-start gap-[2px]">
                  <input type="checkbox" defaultChecked className="peer sr-only" />
                  <span className="flex size-[9px] items-center justify-center border border-[#777] bg-white">
                    <svg viewBox="0 0 8 8" className="size-[7px]"><path d="M1 4L3 6L7 1" stroke="#111" strokeWidth="1.5" fill="none" /></svg>
                  </span>
                  <span>Select default conductive<br />items based on layer type</span>
                </label>
                <span className="mt-2 mb-[2px] text-[#a0a0a0]">Items:</span>
                <ListBox label="Conductor items" items={conductorItems} disabled thumb="h-9" className="h-[98px] w-[118px]" />
                <label className="mt-[8px] flex items-start gap-[2px] text-[#6d6d6d]">
                  <input type="checkbox" disabled className="size-[9px] appearance-none border border-[#c4c4c4] bg-[#f0f0f0]" />
                  <span>Only process pads that are<br />connected by a trace or plane</span>
                </label>
              </div>
            </Group>

            <div className="flex flex-1 flex-col">
              <div className="flex gap-2">
                <Group title="Design items" className="h-[87px] w-[134px] pr-[5px] pl-[7px]">
                  <ListBox label="Design items" items={designItems} selected={["Generated Silkscreen - Top"]} thumb="mt-[10px] h-[20px]" className="mt-[4px] h-[67px]" />
                </Group>
                <Group title="User-defined layers" className="h-[87px] w-[134px] px-[7px]">
                  <ListBox label="User-defined layers" items={userLayers} thumb="h-3" className="mt-[3px] h-[67px]" />
                </Group>
              </div>
              <Group title="Cells" className="mt-[7px] h-[124px] w-[276px] px-2">
                <div className="mt-[3px] flex gap-2">
                  <Group title="Types" className="h-[100px] w-[116px] px-[7px]">
                    <ListBox label="Cell types" items={cellTypes} selected={cellTypes} thumb="h-3" className="mt-[4px] h-[77px] w-[100px]" />
                  </Group>
                  <Group title="Items" className="h-[100px] w-[136px] px-[7px]">
                    <div className="mt-[4px] flex items-center">
                      <label htmlFor="cell-layer" className="w-[22px]">Layer:</label>
                      <Combo id="cell-layer" value="(None)" className="h-[14px] w-[45px]" />
                    </div>
                    <ListBox label="Cell items" items={cellItems} disabled thumb="h-[10px]" className="mt-2 h-[55px] w-[120px]" />
                  </Group>
                </div>
              </Group>
            </div>
          </div>
        </div>

        <div className="mt-[8px] flex items-end">
          <div className="flex flex-col gap-[2px]">
            <label htmlFor="datatype">Data type:</label>
            <input id="datatype" readOnly defaultValue="274X" className="h-[14px] w-[33px] border border-[#c4c4c4] px-px" />
          </div>
          <div className="ml-[6px] flex flex-col gap-[2px]">
            <label htmlFor="machine">Gerber Machine Format file:</label>
            <Combo id="machine" value="Loc: GerberMachineFile1.gmf" white className="h-[14px] w-[110px]" />
          </div>
          <div className="ml-px"><Dots label="Browse format file" /></div>
          <label className="ml-[8px] flex h-[14px] items-center gap-[2px] text-[#6d6d6d]">
            <input type="checkbox" disabled className="size-[9px] appearance-none border border-[#c4c4c4]" />
            <span className="w-[53px] whitespace-nowrap">Output Variants:</span>
          </label>
          <Dots label="Browse variants" flat />
          <div className="ml-auto flex gap-[5px]">
            <button type="submit" className="h-[15px] w-[49px] border border-[#3c8cc8] bg-linear-to-b from-[#f4f4f4] to-[#e8e4e0]">OK</button>
            <button type="button" className="h-[15px] w-[49px] border border-[#b0b0b0] bg-linear-to-b from-[#f4f4f4] to-[#e6e6e6]">Cancel</button>
            <button type="button" className="h-[15px] w-[49px] border border-[#b0b0b0] bg-linear-to-b from-[#f4f4f4] to-[#e6e6e6]">Apply</button>
            <button type="button" aria-label="Help" className="flex h-[15px] w-[15px] items-center justify-center border border-[#b0b0b0]">
              <svg viewBox="0 0 12 12" className="size-[11px]">
                <path d="M1 6L6 1L11 4L6 9Z" fill="#8c1a58" stroke="#300820" />
                <path d="M1 6V8L6 11L11 6V4L6 9Z" fill="#fff" stroke="#300820" />
                <path d="M5 4L7 4L6 6" stroke="#f4d0e0" fill="none" />
              </svg>
            </button>
          </div>
        </div>
      </form>

      <div className="pointer-events-none absolute top-[167px] left-[256px] size-[54px] rounded-full bg-[#ffff38] mix-blend-multiply" />
      <svg viewBox="0 0 8 12" className="pointer-events-none absolute top-[190px] left-[283px] h-[13px] w-[9px]" aria-hidden="true">
        <path d="M1 1V10L3 8L5 11L6 10L5 7H7Z" fill="#fff" stroke="#222" strokeWidth="0.8" />
      </svg>
    </section>
  );
}

function Callout() {
  return (
    <p className="absolute top-[39px] left-[821px] flex h-[193px] w-[342px] items-center justify-center rounded-[32px] border-2 border-[#c4c4a4] bg-[linear-gradient(to_bottom,#ffffc8,#f5ff62_35%,#eeff3c_55%,#f4ff62_72%,#ffffc4)] px-5 text-center font-['Liberation_Sans',sans-serif] text-[22px] leading-[25px] text-[#1c1400]">
      <span>
        Во вкладке Contents вы<br />можете добавить или<br />удалить необходимые вам<br />элементы Gerber-слоя
      </span>
    </p>
  );
}

const functionKeys = ["1 Help", "2 Add Text", "3 Add Line", "4 Add Arc", "5 Add Polyline", "6 Undo", "7 Redo", "8 Add Polygon", "9 Add Rect", "10 Add Circle", "11 Dimension", "12 Assign net"];
const disabledKeys = ["7 Redo", "12 Assign net"];

function BottomPanels() {
  return (
    <div className="flex flex-col px-[15px]">
      <div className="flex h-[19px] items-start text-[7px] leading-[14px]">
        <svg viewBox="0 0 12 16" className="h-4 w-3" aria-hidden="true"><path d="M8 5V11L4 8Z" stroke="#222" fill="none" /></svg>
        <svg viewBox="0 0 16 15" className="h-[15px] w-[15px]" aria-hidden="true"><path d="M0 0L12 15H16V0Z" fill="#e4f1fb" /><path d="M0 0L12 15" stroke="#8aa0b8" /></svg>
        <button type="button" className="flex h-[15px] items-center gap-1 border-b border-[#9ab] bg-[#e4f1fb] pr-[3px] font-bold text-black">
          <Logo /> 1:CORPORATE
        </button>
        <button type="button" className="ml-px flex h-[15px] items-center gap-px rounded-br-sm border-r border-b border-[#8fa4c0] bg-[#b7cce8] pr-[3px] text-[8px] text-[#111]">
          <Logo /> 2:3D View
        </button>
        <svg viewBox="0 0 12 16" className="mr-1 ml-auto h-4 w-3" aria-hidden="true"><path d="M4 5V11L8 8Z" stroke="#222" fill="none" /></svg>
      </div>

      <section>
        <div className="flex h-[13px] items-center justify-between bg-linear-to-b from-[#c2cbdd] to-[#d6dff0] pr-[2px] pb-px pl-[3px] text-[8px] leading-3 text-[#111]">
          <h2>Message Window</h2>
          <svg viewBox="0 0 32 8" className="h-2 w-8" aria-hidden="true">
            <path d="M1 3H7L4 6Z" fill="#111" />
            <path d="M13 1H17V5H13ZM12 5H18M15 5V8M25 1L30 6M30 1L25 6" stroke="#111" strokeWidth="1.3" fill="none" />
          </svg>
        </div>
        <div className="h-16 border border-[#444] bg-[#fdfdfe]" />
        <div className="flex h-3 items-center bg-[#efeff0] text-[8px] text-black">
          <button type="button" aria-label="Scroll tabs left" className="flex h-[11px] w-3 items-center justify-center border border-[#a8a8a8]">
            <span className="border-y-2 border-r-3 border-y-transparent border-r-[#999]" />
          </button>
          <button type="button" aria-label="Scroll tabs right" className="flex h-[11px] w-3 items-center justify-center border border-[#a8a8a8]">
            <span className="border-y-2 border-l-3 border-y-transparent border-l-[#999]" />
          </button>
          <svg viewBox="0 0 5 12" className="h-3 w-[5px]"><path d="M1 0L4 12" stroke="#111" /></svg>
          <button type="button" className="px-[3px] text-[7px] font-bold">Output</button>
          <svg viewBox="0 0 5 12" className="h-3 w-[5px]"><path d="M4 0L1 12" stroke="#111" /></svg>
          <button type="button" className="px-[7px] text-[7px]">Move Trace\Via</button>
          <svg viewBox="0 0 5 12" className="h-3 w-[5px]"><path d="M4 0L1 12" stroke="#111" /></svg>
        </div>
      </section>

      <div className="mt-[3px] mb-[2px] grid grid-cols-12 text-[7px]">
        {functionKeys.map((key) => (
          <button
            key={key}
            type="button"
            disabled={disabledKeys.includes(key)}
            className="h-[17px] border border-[#8c8c8c] bg-[#f0f0f0] text-black disabled:text-[#888]"
          >
            {key}
          </button>
        ))}
      </div>
    </div>
  );
}

function StatusBar() {
  return (
    <footer className="flex h-3 items-center border-t border-[#d4d4d8] bg-[#ebebee] text-[7px] whitespace-pre text-black">
      <span className="w-[292px] pl-1">Gerber Plot Setup</span>
      <span className="w-[288px]">{"Wd:5 Ln:1,073.55 Lyr:5  <1,495, 1,781.45>  <1,495, 2,855>"}</span>
      <span className="w-[288px]">Vp:6.2688(in/ns) Zo:64.034(ohms) Dly:0.17(ns) Imax:0.5(A)</span>
      <span className="flex-1">Electrical Net:$3N125 Constraint Class:(All) Net:$3N125 Class:(Default)</span>
      <span className="w-9 bg-black px-px leading-[10px] font-bold text-[#38d8d0]"><span className="text-[#d82890]">2H, </span>5V</span>
      <span className="mx-1">Gloss Local</span>
      <span className="flex gap-[2px] border-l border-[#c4c4c8] px-1">
        <span className="size-[7px] rounded-full border border-[#888] bg-[#ccc]" />
        <span className="size-[7px] rounded-full border border-[#888] bg-[#ccc]" />
        <span className="size-[7px] rounded-full border border-[#3a8a3a] bg-[#38e038]" />
      </span>
      <span className="w-[9px]" />
    </footer>
  );
}

export default function App() {
  return (
    <div className="flex h-screen flex-col overflow-hidden bg-[#eeedfa] font-['Open_Sans','Noto_Sans',sans-serif]">
      <Header />
      <div className="flex min-h-0 flex-1">
        <SideTabs tabs={["Component Explorer", "Analysis Control", "Hazard Explorer", "Net Explorer"]} />
        <main className="min-w-0 flex-1 border border-[#9a9aa8] bg-[#f6f6fa] p-[3px]">
          <div className="relative size-full bg-black">
            <Board />
            <GerberDialog />
            <Callout />
          </div>
        </main>
        <SideTabs className="items-end" tabs={["Editor Control", "Display Control - 1:CORPORATE"]} />
      </div>
      <BottomPanels />
      <StatusBar />
    </div>
  );
}
